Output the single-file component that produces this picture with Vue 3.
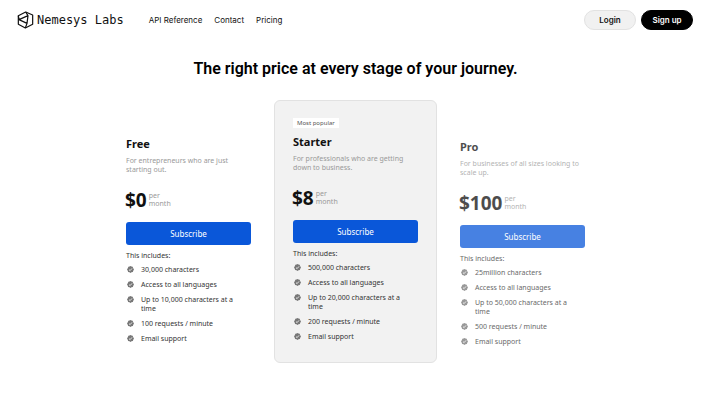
<script setup>
const links = ['API Reference', 'Contact', 'Pricing']

const plans = [
  {
    name: 'Free',
    blurb: 'For entrepreneurs who are just starting out.',
    price: '$0',
    features: ['30,000 characters', 'Access to all languages', 'Up to 10,000 characters at a time', '100 requests / minute', 'Email support'],
  },
  {
    name: 'Starter',
    variant: 'featured',
    badge: 'Most popular',
    blurb: 'For professionals who are getting down to business.',
    price: '$8',
    features: ['500,000 characters', 'Access to all languages', 'Up to 20,000 characters at a time', '200 requests / minute', 'Email support'],
  },
  {
    name: 'Pro',
    variant: 'muted',
    blurb: 'For businesses of all sizes looking to scale up.',
    price: '$100',
    features: ['25million characters', 'Access to all languages', 'Up to 50,000 characters at a time', '500 requests / minute', 'Email support'],
  },
]
</script>

<template>
  <div class="page">
    <header class="header">
      <a class="brand" href="#">
        <svg class="logo" viewBox="0 0 51 54" aria-hidden="true">
          <path d="M26 3 47 12V40L25 51 4 40V14Z" />
          <path d="M6 26 33 14 30 37ZM33 14 26 3M30 37 25 51M6 26 4 14" />
        </svg>
        <span>Nemesys Labs</span>
      </a>
      <nav class="nav">
        <a v-for="link in links" :key="link" href="#">{{ link }}</a>
      </nav>
      <div class="actions">
        <button type="button" class="pill light">Login</button>
        <button type="button" class="pill dark">Sign up</button>
      </div>
    </header>

    <main>
      <h1>The right price at every stage of your journey.</h1>
      <div class="plans">
        <section v-for="plan in plans" :key="plan.name" class="plan" :class="plan.variant">
          <span v-if="plan.badge" class="badge">{{ plan.badge }}</span>
          <h2>{{ plan.name }}</h2>
          <p class="blurb">{{ plan.blurb }}</p>
          <div class="price">
            <strong>{{ plan.price }}</strong>
            <span class="period">per<br />month</span>
          </div>
          <button type="button" class="subscribe">Subscribe</button>
          <p class="includes">This includes:</p>
          <ul>
            <li v-for="feature in plan.features" :key="feature">
              <svg class="check" viewBox="0 0 14 14" aria-hidden="true">
                <path class="seal" d="M7 0 9 1.200 11.300 1.300 12.200 3.800 14 7 12.500 9.300 11.800 12 9 12.700 7 14 5 12.700 2.200 12 1.500 9.300 0 7 1.800 3.800 2.700 1.300 5 1.200Z" />
                <path class="tick" d="M4 7.200 6.200 9.300 10 4.800" />
              </svg>
              <span>{{ feature }}</span>
            </li>
          </ul>
        </section>
      </div>
    </main>
  </div>
</template>

<style>
body {
  margin: 0;
  background: #fff;
}
</style>

<style scoped>
.page {
  color: #111;
  font-family: "Noto Sans", sans-serif;
}
.header {
  display: flex;
  align-items: center;
  height: 39px;
  padding: 0 18px 0 17px;
  box-sizing: border-box;
  font-family: Inter, sans-serif;
}
a {
  color: inherit;
  text-decoration: none;
}
.brand {
  display: flex;
  align-items: center;
  gap: 3px;
  font: 12px "DejaVu Sans Mono", monospace;
  color: #111;
}
.logo {
  width: 17px;
  height: 18px;
  fill: none;
  stroke: #111;
  stroke-width: 3.6;
  stroke-linejoin: round;
}
.nav {
  display: flex;
  gap: 12px;
  margin-left: 25px;
  font-size: 8px;
}
.actions {
  display: flex;
  gap: 5px;
  margin-left: auto;
}
button {
  cursor: pointer;
}
.pill {
  width: 52px;
  height: 20px;
  padding: 0;
  border: 1px solid #000;
  border-radius: 10px;
  font: 600 8px/16px Inter, sans-serif;
}
.light {
  background: #f1f1f1;
  border-color: #e2e2e2;
  color: #111;
}
.dark {
  background: #000;
  color: #fff;
}
h1 {
  margin: 19px 0 0;
  text-align: center;
  font: 600 16px/22px Roboto, sans-serif;
  color: #000;
}
.plans {
  display: grid;
  grid-template-columns: repeat(3, minmax(0, 163px));
  justify-content: center;
  gap: 4px;
  margin-top: 20px;
  padding-bottom: 24px;
}
.plan {
  padding: 36px 18px 16px;
  border: 1px solid transparent;
  border-radius: 6px;
}
.featured {
  padding-top: 17px;
  background: #f2f2f2;
  border-color: #e2e2e2;
}
.muted {
  padding-top: 39px;
  opacity: 0.75;
}
.badge {
  display: block;
  width: fit-content;
  margin-bottom: 7px;
  padding: 0 4px;
  background: #fff;
  color: #555;
  font-size: 6px;
  line-height: 10px;
}
h2 {
  margin: 0;
  font-size: 11px;
  line-height: 14px;
}
.blurb {
  margin: 5px 0 0;
  color: #999;
  font-size: 7px;
  line-height: 9px;
}
.price {
  display: flex;
  align-items: center;
  gap: 2px;
  margin: 14px 0 10px -1px;
}
.price strong {
  font-size: 19px;
  line-height: 24px;
}
.period {
  color: #999;
  font-size: 7px;
  line-height: 8px;
}
.subscribe {
  display: block;
  width: 100%;
  height: 23px;
  padding: 0;
  border: 0;
  border-radius: 3px;
  background: #0a57d9;
  color: #fff;
  font: 8px "Noto Sans", sans-serif;
}
.includes {
  margin: 6px 0 0;
  color: #333;
  font-size: 7px;
  line-height: 9px;
}
ul {
  display: grid;
  gap: 6px;
  margin: 5px 0 0;
  padding: 0 12px 0 0;
  list-style: none;
  color: #333;
  font-size: 7px;
  line-height: 9px;
}
li {
  display: flex;
  gap: 7px;
}
.check {
  flex: none;
  width: 7px;
  height: 7px;
  margin: 1px 0 0 1px;
}
.seal {
  fill: #777;
}
.tick {
  fill: none;
  stroke: #fff;
  stroke-width: 1.6;
}
</style>
